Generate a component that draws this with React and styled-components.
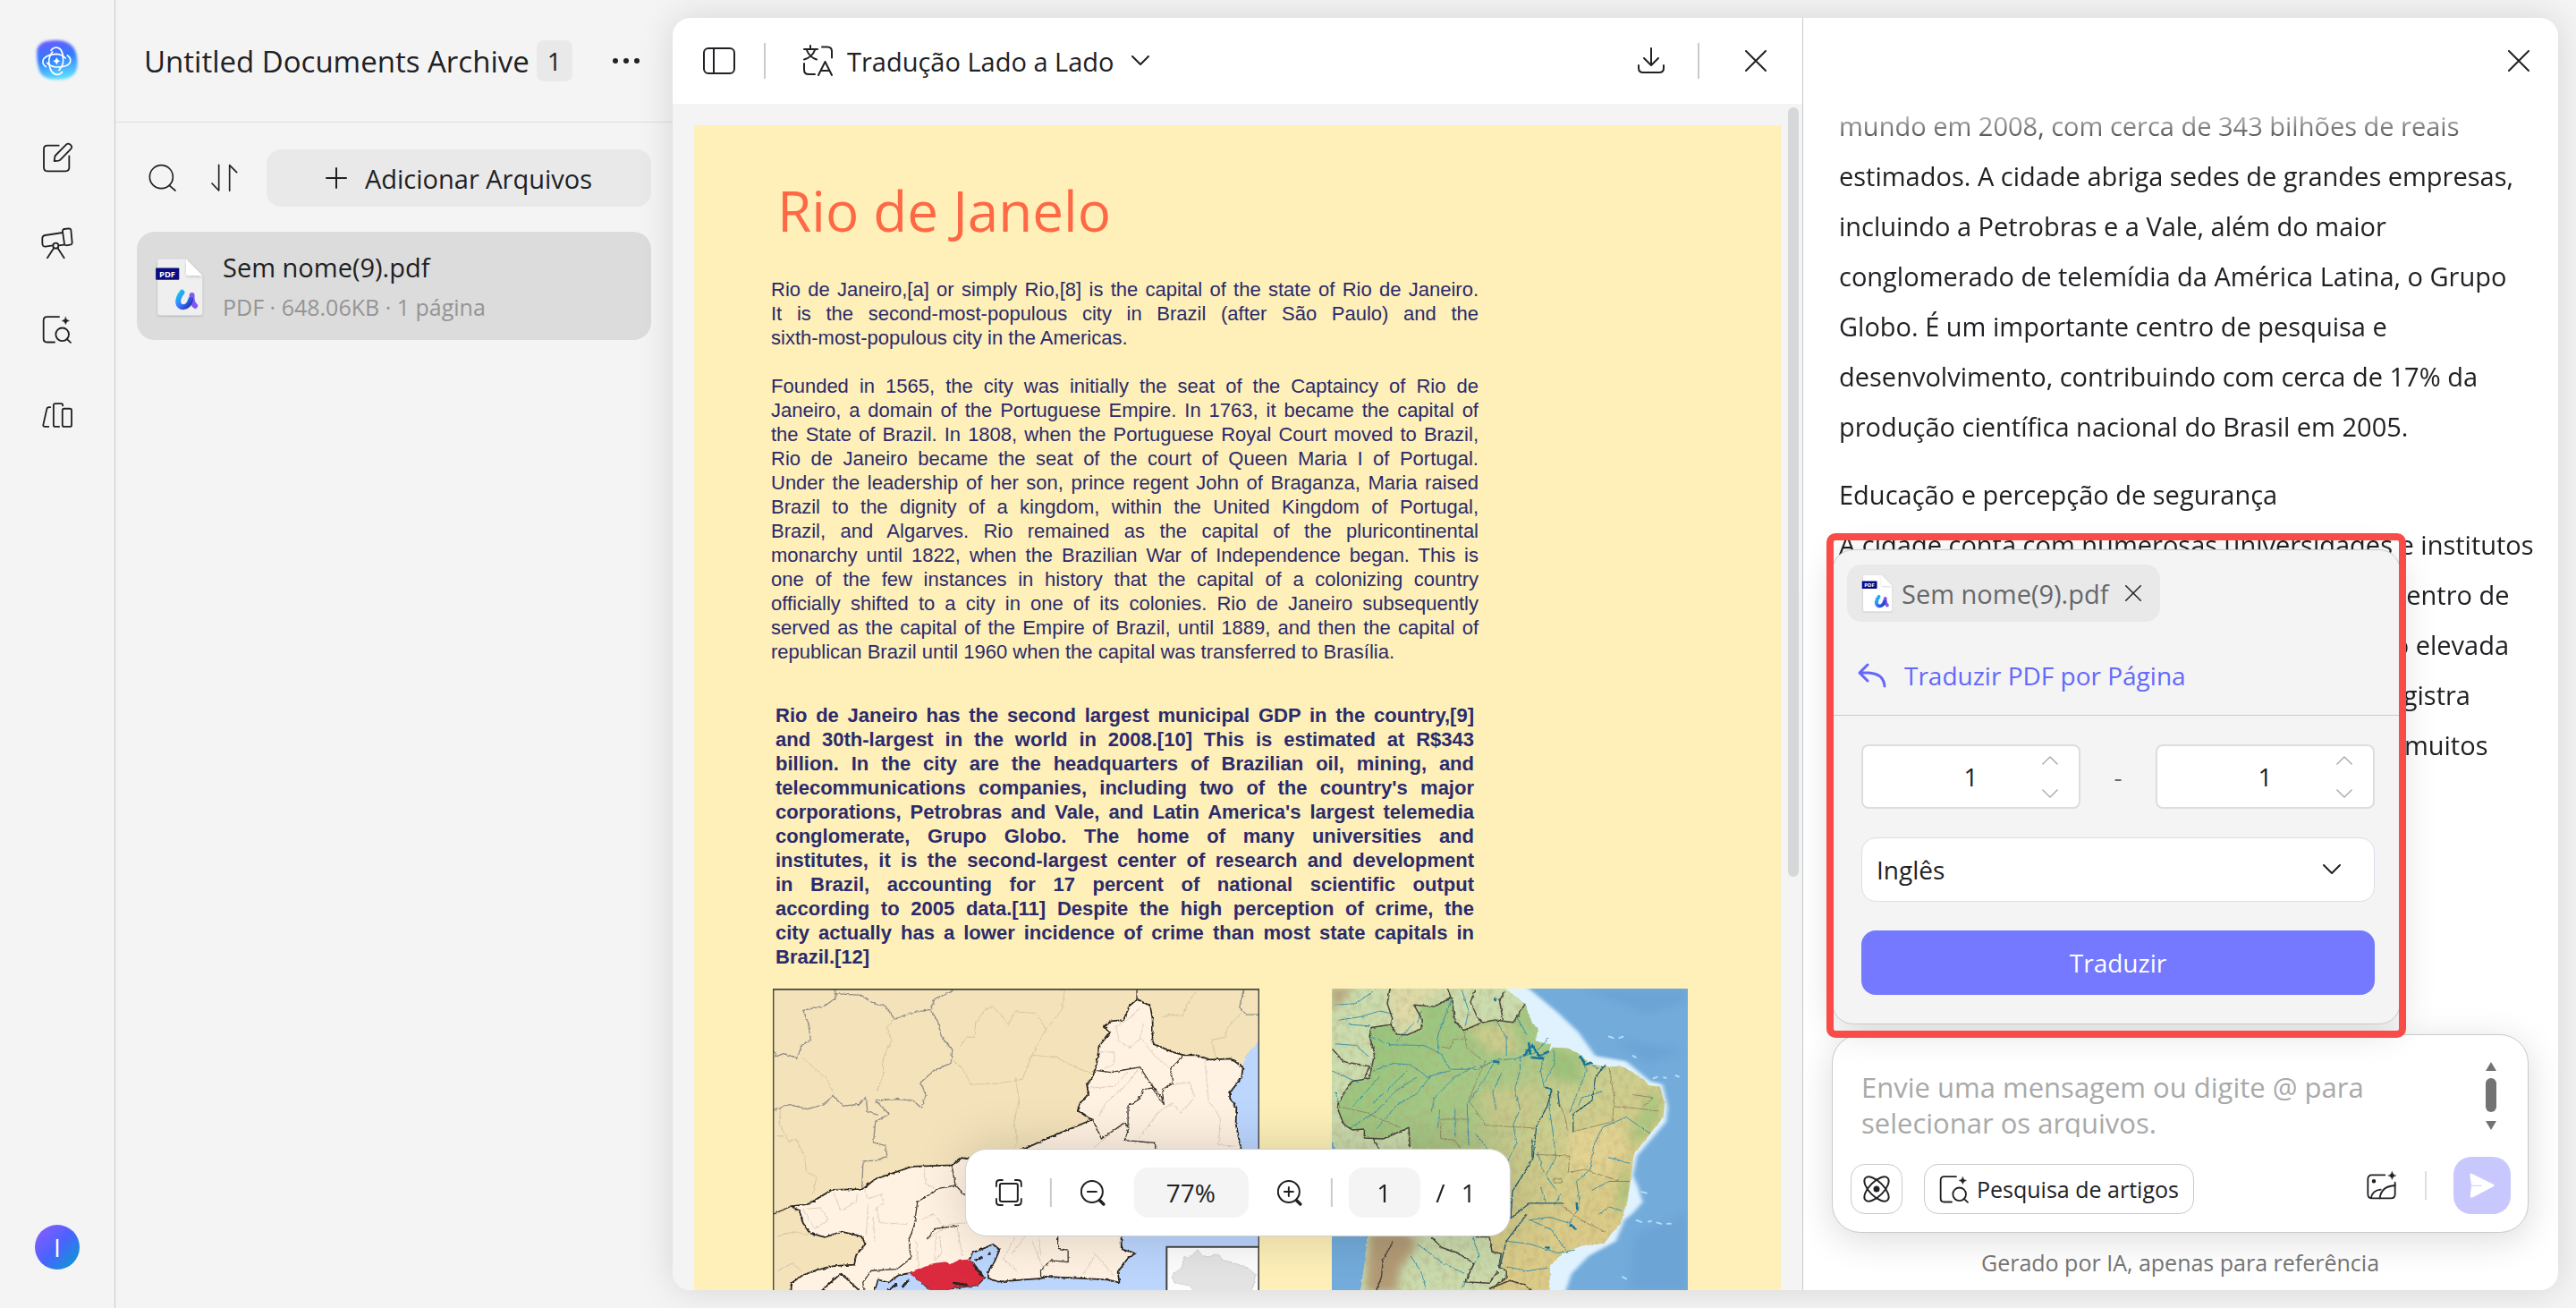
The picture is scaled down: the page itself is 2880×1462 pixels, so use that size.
import React, {useState} from 'react'

import styled, {createGlobalStyle} from 'styled-components'


const colors = {
	bg: '#f4f4f4',
	ink: '#202124',
	line: '#c9caca',
	chip: '#e9e9e9',
	violet: '#7579ff',
	link: '#6468fb',
	red: '#f94b47',
	navy: '#2a2a6c',
}

const GlobalStyle = createGlobalStyle`
	*, *::before, *::after {
		box-sizing: border-box;
	}
	body {
		margin: 0;
		background: ${colors.bg};
		color: ${colors.ink};
		font-family: "Open Sans", "Noto Sans", sans-serif;
		font-size: 28px;
	}
	button, input, select, textarea {
		font: inherit;
		color: inherit;
	}
`

/* ---------- shared ---------- */

const Svg = styled.svg`
	display: block;
	flex: none;
	fill: none;
	stroke: currentColor;
	stroke-width: ${p => p.$stroke || 2};
	stroke-linecap: round;
	stroke-linejoin: round;
`

const IconButton = styled.button`
	display: flex;
	align-items: center;
	justify-content: center;
	flex: none;
	width: ${p => p.$size || 40}px;
	height: ${p => p.$size || 40}px;
	padding: 0;
	border: none;
	background: none;
	cursor: pointer;
`

const Divider = styled.span`
	flex: none;
	width: 2px;
	height: ${p => p.$height}px;
	margin: ${p => p.$margin || '0'};
	background: ${p => p.$color || colors.line};
`

const Spacer = styled.div`
	flex: 1;
`

/* ---------- icons ---------- */

const Logo = () => (
	<svg width="52" height="50" viewBox="56 38 156 150" aria-hidden="true">
		<defs>
			<linearGradient id="logoFill" x1="0.3" y1="0" x2="0.5" y2="1">
				<stop offset="0" stopColor="#6a5cff" />
				<stop offset="0.45" stopColor="#2f7bff" />
				<stop offset="1" stopColor="#5fe0ff" />
			</linearGradient>
			<filter id="logoBlur"><feGaussianBlur stdDeviation="4" /></filter>
		</defs>
		<path d="M66 78Q70 44 130 44q52 0 66 40 8 24 4 54-8 38-66 38-50 0-60-30-10-30-8-68z" fill="url(#logoFill)" filter="url(#logoBlur)" />
		<g fill="none" stroke="#fff" strokeWidth="5" strokeLinecap="round">
			<path d="M113 78q7-10 19-10 22 3 22 42 0 20-14 34" />
			<path d="M168 95q12 8 10 20-4 19-44 19-20 0-34-14" />
			<path d="M151 150q-7 10-19 9-22-2-26-42 0-20 12-34" />
			<path d="M96 133q-12-8-10-20 4-19 42-23 20 0 34 14" />
		</g>
		<path d="M132 102q3 10 12 12-9 2-12 12-3-10-12-12 9-2 12-12z" fill="#fff" />
	</svg>
)

const EditIcon = () => (
	<Svg width="35" height="35" viewBox="81 387 105 105" $stroke={5.5}>
		<path d="M137 398H99q-12 0-12 12v62q0 12 12 12h61q12 0 12-12v-39" />
		<path d="M122 450l2-14q1-4 4-7l34-34q6-6 14 0 8 7 2 14l-35 36q-3 3-7 4z" />
	</Svg>
)

const TelescopeIcon = () => (
	<Svg width="36" height="36" viewBox="77 670 108 108" $stroke={5.5}>
		<path d="M149 688L90 697q-9 2-9 10v17q1 11 10 11l25-4M136 731l18-2" />
		<path d="M154 676l17-2q5 0 6 5l4 43q0 5-4 6l-15 3q-6 0-7-5l-6-42q0-7 5-8z" />
		<circle cx="126" cy="732" r="9" />
		<path d="M120 739L98 773M132 739l22 34" />
	</Svg>
)

const PaperSearchIcon = () => (
	<Svg width="34" height="33" viewBox="82 968 102 98" $stroke={5.5}>
		<path d="M139 974H99q-12 0-12 12v61q0 12 12 12h25" />
		<circle cx="150" cy="1033" r="22" />
		<path d="M165 1048l13 12" />
		<path d="M161 974q2 11 13 13-11 2-13 13-2-11-13-13 11-2 13-13z" fill="currentColor" strokeWidth="1" />
	</Svg>
)

const LibraryIcon = () => (
	<Svg width="35" height="30" viewBox="78 1257 106 90" $stroke={5.5}>
		<path d="M106 1275h-4q-7 0-8 7l-12 53q-1 6 6 6h12" />
		<path d="M148 1270v-3q0-4-5-4h-20q-6 0-6 6v66q0 6 6 6h13" />
		<rect x="147" y="1280" width="31" height="61" rx="6" />
	</Svg>
)

const SearchIcon = () => (
	<Svg width="32" height="32" viewBox="438 461 96 96" $stroke={5}>
		<circle cx="481" cy="505" r="39" />
		<path d="M508 534l20 17" />
	</Svg>
)

const SortIcon = () => (
	<Svg width="32" height="32" viewBox="649 457 96 96" $stroke={5}>
		<path d="M678 461v86l-23-24M714 548v-86l24 24" />
	</Svg>
)

const PlusIcon = () => (
	<Svg width="24" height="24" viewBox="0 0 24 24">
		<path d="M12 1v22M1 12h22" />
	</Svg>
)

const DotsIcon = () => (
	<Svg width="32" height="8" viewBox="0 0 32 8">
		<g fill="currentColor" stroke="none">
			<circle cx="4" cy="4" r="3" />
			<circle cx="16" cy="4" r="3" />
			<circle cx="28" cy="4" r="3" />
		</g>
	</Svg>
)

const PanelIcon = () => (
	<Svg width="36" height="30" viewBox="0 0 36 30">
		<rect x="1" y="1" width="34" height="28" rx="5" />
		<path d="M12 1v28" />
	</Svg>
)

const TranslateIcon = () => (
	<Svg width="36" height="36" viewBox="896 50 36 36">
		<path d="M906 51v4M899 55h15M902 56q3 8 11 10.500M911 56q-3 8-12 10.500" />
		<path d="M919 52.500h6q5 0 5 5v7M899 71v7q0 5 5 5h7" />
		<path d="M915 84l7.500-15 7.500 15M918 79h9" />
	</Svg>
)

const Chevron = ({up, width = 20, stroke = 2}) => (
	<Svg width={width} height={width / 2 + 2} viewBox="0 0 20 12" $stroke={stroke}>
		<path d={up ? 'M1 11l9-9 9 9' : 'M1 1l9 9 9-9'} />
	</Svg>
)

const DownloadIcon = () => (
	<Svg width="32" height="30" viewBox="1830 53 32 30">
		<path d="M1846 54v19M1838 65l8 8 8-8M1832 73v3q0 5 5 5h18q5 0 5-5v-3" />
	</Svg>
)

const CloseIcon = ({size = 24}) => (
	<Svg width={size} height={size} viewBox="0 0 24 24">
		<path d="M1 1l22 22M23 1L1 23" />
	</Svg>
)

const FitIcon = () => (
	<Svg width="30" height="30" viewBox="0 0 30 30">
		<rect x="5" y="5" width="20" height="20" rx="2" />
		<path d="M1 8V5q0-4 4-4h3M22 1h3q4 0 4 4v3M29 22v3q0 4-4 4h-3M8 29H5q-4 0-4-4v-3" />
	</Svg>
)

const ZoomIcon = ({plus}) => (
	<Svg width="28" height="30" viewBox="0 0 28 30">
		<circle cx="13" cy="14" r="12" />
		<path d={plus ? 'M8 14h10M13 9v10' : 'M8 14h10'} />
		<path d="M22 24l4 4" strokeWidth="3.500" />
	</Svg>
)

const BackIcon = () => (
	<Svg width="32" height="28" viewBox="0 0 32 28" $stroke={3}>
		<path d="M11 2L2 11l9 9M2 11h10q17 1 18 15" />
	</Svg>
)

const AtomIcon = () => (
	<Svg width="32" height="32" viewBox="0 0 32 32">
		<ellipse cx="16" cy="16" rx="17.500" ry="8" transform="rotate(45 16 16)" />
		<ellipse cx="16" cy="16" rx="17.500" ry="8" transform="rotate(-45 16 16)" />
		<circle cx="16" cy="16" r="2.500" fill="currentColor" />
	</Svg>
)

const PictureIcon = () => (
	<Svg width="34" height="34" viewBox="1040 383 102 102" $stroke={5.5}>
		<path d="M1101 399h-43q-14 0-14 14v50q0 14 14 14h63q14 0 14-14v-39" />
		<path d="M1055 476q4-26 32-28M1084 477q4-40 51-43" />
		<circle cx="1064" cy="420" r="4" fill="currentColor" />
		<path d="M1125 387q2 12 14 14-12 2-14 14-2-12-14-14 12-2 14-14z" fill="currentColor" strokeWidth="1" />
	</Svg>
)

const SendIcon = () => (
	<svg width="28" height="28" viewBox="1388 394 84 84" aria-hidden="true">
		<path d="M1395 396l73 36q5 4 0 8l-72 37q-5 1-6-4l4-35h34v-3h-34l-5-34q0-6 6-5z" fill="#fff" />
	</svg>
)

const PdfIcon = ({width, paper}) => (
	<svg width={width} height={Math.round(width * 1.2)} viewBox="462 772 160 192" aria-hidden="true">
		<defs>
			<linearGradient id="uLeft" x1="0" y1="0" x2="1" y2="1">
				<stop offset="0" stopColor="#16c6f5" />
				<stop offset="0.5" stopColor="#3a78ff" />
				<stop offset="1" stopColor="#1f2fae" />
			</linearGradient>
			<filter id="softShadow" x="-20%" y="-20%" width="140%" height="150%">
				<feDropShadow dx="0" dy="4" stdDeviation="4" floodOpacity="0.18" />
			</filter>
		</defs>
		<path d="M477 777h85l52 52v121q0 6-6 6H477q-6 0-6-6V783q0-6 6-6z" fill={paper} filter="url(#softShadow)" />
		<path d="M562 777l52 52h-46q-6 0-6-6z" fill="#fff" filter="url(#softShadow)" />
		<rect x="465" y="805" width="75" height="38" rx="2" fill="#0b0b82" />
		<text x="502" y="834" fontSize="27" fontWeight="700" fill="#fff" textAnchor="middle">PDF</text>
		<g fill="none" strokeLinecap="round">
			<path d="M581 892q-2 24 10 34" stroke="#8458f0" strokeWidth="17" />
			<path d="M549 883q-14 18-12 34 3 14 18 13 16-2 22-24" stroke="url(#uLeft)" strokeWidth="17" />
		</g>
	</svg>
)

/* ---------- left rail ---------- */

const Shell = styled.div`
	display: flex;
	height: 100vh;
	overflow: hidden;
`

const Rail = styled.nav`
	display: flex;
	flex-direction: column;
	align-items: center;
	flex: none;
	width: 129px;
	padding: 43px 0;
	border-right: 1px solid ${colors.line};
`

const RailLinks = styled.div`
	display: flex;
	flex-direction: column;
	gap: 48px;
	margin-top: 59px;
`

const RailLink = styled.a`
	display: flex;
	align-items: center;
	justify-content: center;
	width: 48px;
	height: 48px;
	color: inherit;
`

const Avatar = styled.button`
	width: 50px;
	height: 50px;
	margin-top: auto;
	padding: 0;
	border: none;
	border-radius: 50%;
	background: linear-gradient(135deg, #8a5cff 5%, #4a63ff 50%, #00a3c8 100%);
	color: white;
	line-height: 50px;
`

/* ---------- file sidebar ---------- */

const Sidebar = styled.aside`
	flex: none;
	width: 623px;
`

const SidebarHeader = styled.header`
	display: flex;
	align-items: center;
	height: 137px;
	padding: 0 32px 0 32px;
	border-bottom: 1px solid #dcdce8;
`

const ArchiveTitle = styled.h1`
	margin: 0;
	font-size: 33px;
	font-weight: 400;
	white-space: nowrap;
`

const CountBadge = styled.span`
	width: 40px;
	margin-left: 8px;
	border-radius: 8px;
	background: ${colors.chip};
	line-height: 46px;
	text-align: center;
`

const SidebarBody = styled.div`
	padding: 30px 24px;
`

const FileTools = styled.div`
	display: flex;
	align-items: center;
	gap: 25px;
	padding-left: 7px;
`

const AddButton = styled.button`
	display: flex;
	align-items: center;
	justify-content: center;
	gap: 20px;
	flex: 1;
	height: 64px;
	border: none;
	border-radius: 16px;
	background: ${colors.chip};
	font-size: 29px;
`

const FileCard = styled.a`
	display: flex;
	align-items: center;
	gap: 20px;
	margin-top: 28px;
	padding: 18px 20px 15px;
	border-radius: 20px;
	background: #dcdcdc;
	color: inherit;
	text-decoration: none;
`

const FileName = styled.div`
	font-size: 29px;
	line-height: 44px;
`

const FileMeta = styled.div`
	color: #949494;
	font-size: 25px;
	line-height: 44px;
`

/* ---------- document viewer ---------- */

const Workspace = styled.main`
	display: flex;
	flex: 1;
	min-width: 0;
	margin: 20px 20px 20px 0;
	border-radius: 20px;
	background: white;
	box-shadow: 0 0 40px rgba(0, 0, 0, 0.13);
`

const Viewer = styled.section`
	position: relative;
	display: flex;
	flex-direction: column;
	flex: 1;
	min-width: 0;
`

const ViewerBar = styled.header`
	display: flex;
	align-items: center;
	flex: none;
	height: 96px;
	padding: 0 32px;
`

const ModeButton = styled.button`
	display: flex;
	align-items: center;
	gap: 15px;
	padding: 0;
	border: none;
	background: none;
	font-size: 29px;
	white-space: nowrap;

	svg:last-child {
		margin-left: 4px;
	}
`

const ViewerBody = styled.div`
	flex: 1;
	min-height: 0;
	padding: 24px 24px 0;
	overflow: hidden;
	border-bottom-left-radius: 20px;
	background: ${colors.bg};
`

const ScrollThumb = styled.div`
	position: absolute;
	top: 100px;
	right: 4px;
	width: 12px;
	height: 65%;
	max-height: 860px;
	border-radius: 6px;
	background: #d5d7d9;
`

const Page = styled.article`
	padding: 50px 86px 0;
	background: #fef0b8;
	color: ${colors.navy};
	font-family: "Liberation Sans", Arial, sans-serif;
	font-size: 22px;
	line-height: 27px;
`

const PageTitle = styled.h2`
	margin: 0 0 30px 7px;
	color: #ff6845;
	font-family: "Open Sans", "Noto Sans", sans-serif;
	font-size: 62px;
	font-weight: 400;
	line-height: 90px;
`

const Paragraph = styled.p`
	width: ${p => p.$bold ? 781 : 791}px;
	margin: 0 0 27px;
	font-weight: ${p => p.$bold ? 700 : 400};

	${p => p.$bold && `
		margin: 44px 0 22px 5px;
	`}
`

const Line = styled.span`
	display: block;
	text-align-last: justify;
	white-space: nowrap;

	&:last-child {
		text-align-last: left;
	}
`

const Figures = styled.div`
	display: flex;
	gap: 81px;
	padding-left: 2px;
`

const Figure = styled.svg`
	display: block;
	flex: none;
	width: ${p => p.$width}px;
	height: 338px;

	path, rect {
		vector-effect: non-scaling-stroke;
	}
`

const PagerBar = styled.div`
	position: absolute;
	left: 50%;
	bottom: 60px;
	display: flex;
	align-items: center;
	height: 98px;
	padding: 0 38px 0 28px;
	transform: translateX(-50%);
	border: 1px solid #cfcfd2;
	border-radius: 24px;
	background: white;
	box-shadow: 0 0 60px rgba(0, 0, 0, 0.16);
	white-space: nowrap;
`

const ZoomLevel = styled.span`
	width: 128px;
	margin: 0 26px;
	border-radius: 16px;
	background: ${colors.bg};
	line-height: 56px;
	text-align: center;
`

const PageInput = styled.input`
	width: 80px;
	height: 56px;
	padding: 0;
	border: none;
	border-radius: 16px;
	background: ${colors.bg};
	text-align: center;
`

const PageTotal = styled.span`
	display: flex;
	gap: 18px;
	margin-left: 18px;
`

/* ---------- chat ---------- */

const Chat = styled.section`
	display: flex;
	flex-direction: column;
	flex: none;
	width: 845px;
	padding: 0 33px 0 32px;
	border-left: 1px solid ${colors.line};
`

const ChatHeader = styled.header`
	display: flex;
	justify-content: flex-end;
	align-items: center;
	flex: none;
	height: 96px;
	margin-right: -9px;
`

const Messages = styled.div`
	flex: 1;
	min-height: 0;
	margin: -3px -24px 0 0;
	padding: 0 0 0 8px;
	overflow: hidden;
	font-size: 29px;
	line-height: 56px;
	white-space: nowrap;
	mask-image: linear-gradient(transparent, black 52px);
`

const MessageText = styled.p`
	margin: 0 0 20px;

	span {
		display: block;
	}
`

const ComposerArea = styled.div`
	position: relative;
	flex: none;
`

const Composer = styled.form`
	height: 222px;
	padding: 30px 19px 18px 32px;
	border: 1px solid ${colors.line};
	border-radius: 32px;
	background: white;
	box-shadow: 0 8px 40px rgba(0, 0, 0, 0.14);
`

const ComposerTop = styled.div`
	display: flex;
	justify-content: space-between;
	padding-right: 16px;
`

const MessageInput = styled.textarea`
	width: 640px;
	height: 76px;
	margin-top: 8px;
	padding: 0;
	border: none;
	outline: none;
	overflow: hidden;
	resize: none;
	background: none;
	font-size: 31px;
	line-height: 40px;

	&::placeholder {
		color: #a9a9a9;
	}
`

const ComposerActions = styled.div`
	display: flex;
	align-items: center;
	margin: 22px 0 0 -12px;
`

const ToolButton = styled.button`
	display: flex;
	align-items: center;
	justify-content: center;
	align-self: flex-end;
	gap: 8px;
	height: 56px;
	margin-right: 24px;
	padding: 0 ${p => p.$wide ? 16 : 12}px;
	border: 1px solid ${colors.line};
	border-radius: 16px;
	background: white;
	font-size: 25px;
	white-space: nowrap;
`

const SendButton = styled.button`
	display: flex;
	align-items: center;
	justify-content: center;
	width: 64px;
	height: 64px;
	padding: 0;
	border: none;
	border-radius: 20px;
	background: #c8c8ff;
`

const Notice = styled.p`
	flex: none;
	margin: 0;
	padding: 12px 0 10px;
	color: #757575;
	font-size: 25px;
	line-height: 42px;
	text-align: center;
`

/* ---------- translate popup ---------- */

const Popup = styled.div`
	position: absolute;
	left: 0;
	bottom: calc(100% + 11px);
	z-index: 2;
	width: 636px;
	border: 1px solid ${colors.line};
	border-radius: 24px;
	background: ${colors.bg};
	box-shadow: 0 8px 40px rgba(0, 0, 0, 0.14);

	/* highlight frame around the whole panel */
	&::after {
		content: '';
		position: absolute;
		inset: -19px -7px -16px;
		border: 8px solid ${colors.red};
		border-radius: 10px;
		pointer-events: none;
	}
`

const PopupTop = styled.div`
	padding: 16px 16px 12px;
	border-bottom: 1px solid ${colors.line};
`

const FileChip = styled.div`
	display: flex;
	align-items: center;
	width: fit-content;
	height: 64px;
	padding: 0 16px;
	border-radius: 16px;
	background: ${colors.chip};
	color: #66676a;
	font-size: 29px;

	button {
		margin-left: 14px;
		color: ${colors.ink};
	}
`

const ChipLabel = styled.span`
	margin-left: 9px;
`

const BackButton = styled.button`
	display: flex;
	align-items: center;
	gap: 20px;
	height: 64px;
	margin-top: 28px;
	padding: 0 12px;
	border: none;
	background: none;
	color: ${colors.link};
`

const PopupForm = styled.form`
	display: flex;
	flex-direction: column;
	gap: 32px;
	padding: 32px 28px 32px 32px;
`

const Range = styled.div`
	display: flex;
	align-items: center;
	justify-content: space-between;
	color: #66676a;
`

const NumberField = styled.div`
	position: relative;
	width: 245px;
	color: #a5a7ab;

	input {
		display: block;
		width: 100%;
		height: 72px;
		padding: 0;
		border: 2px solid #dcdddd;
		border-radius: 8px;
		background: white;
		color: ${colors.ink};
		text-align: center;
		appearance: textfield;
	}
	input::-webkit-inner-spin-button {
		display: none;
	}
`

const Steppers = styled.div`
	position: absolute;
	top: 0;
	right: 18px;
	display: flex;
	flex-direction: column;
	justify-content: center;
	gap: 6px;
	height: 100%;
`

const LanguageField = styled.div`
	position: relative;
	display: flex;
	align-items: center;

	select {
		width: 100%;
		height: 72px;
		padding: 0 16px;
		appearance: none;
		border: 1px solid #dcdde8;
		border-radius: 16px;
		background: white;
	}
	svg {
		position: absolute;
		right: 38px;
		pointer-events: none;
	}
`

const TranslateButton = styled.button`
	height: 72px;
	border: none;
	border-radius: 16px;
	background: ${colors.violet};
	color: white;
`

/* ---------- content ---------- */

const intro = [
	'Rio de Janeiro,[a] or simply Rio,[8] is the capital of the state of Rio de Janeiro.',
	'It is the second-most-populous city in Brazil (after São Paulo) and the',
	'sixth-most-populous city in the Americas.',
]

const history = [
	'Founded in 1565, the city was initially the seat of the Captaincy of Rio de',
	'Janeiro, a domain of the Portuguese Empire. In 1763, it became the capital of',
	'the State of Brazil. In 1808, when the Portuguese Royal Court moved to Brazil,',
	'Rio de Janeiro became the seat of the court of Queen Maria I of Portugal.',
	'Under the leadership of her son, prince regent John of Braganza, Maria raised',
	'Brazil to the dignity of a kingdom, within the United Kingdom of Portugal,',
	'Brazil, and Algarves. Rio remained as the capital of the pluricontinental',
	'monarchy until 1822, when the Brazilian War of Independence began. This is',
	'one of the few instances in history that the capital of a colonizing country',
	'officially shifted to a city in one of its colonies. Rio de Janeiro subsequently',
	'served as the capital of the Empire of Brazil, until 1889, and then the capital of',
	'republican Brazil until 1960 when the capital was transferred to Brasília.',
]

const economy = [
	'Rio de Janeiro has the second largest municipal GDP in the country,[9]',
	'and 30th-largest in the world in 2008.[10] This is estimated at R$343',
	'billion. In the city are the headquarters of Brazilian oil, mining, and',
	'telecommunications companies, including two of the country\'s major',
	'corporations, Petrobras and Vale, and Latin America\'s largest telemedia',
	'conglomerate, Grupo Globo. The home of many universities and',
	'institutes, it is the second-largest center of research and development',
	'in Brazil, accounting for 17 percent of national scientific output',
	'according to 2005 data.[11] Despite the high perception of crime, the',
	'city actually has a lower incidence of crime than most state capitals in',
	'Brazil.[12]',
]

const answer = [
	[
		'mundo em 2008, com cerca de 343 bilhões de reais',
		'estimados. A cidade abriga sedes de grandes empresas,',
		'incluindo a Petrobras e a Vale, além do maior',
		'conglomerado de telemídia da América Latina, o Grupo',
		'Globo. É um importante centro de pesquisa e',
		'desenvolvimento, contribuindo com cerca de 17% da',
		'produção científica nacional do Brasil em 2005.',
	],
	[
		'Educação e percepção de segurança',
		'A cidade conta com numerosas universidades e institutos',
		'de pesquisa, sendo o segundo maior polo e o centro de',
		'pesquisa do país. Embora já exista a percepção elevada',
		'de criminalidade, a cidade na verdade ainda registra',
		'só uma taxa menor de crimes se comparada a muitos',
	],
]

/* ---------- maps ---------- */

const coast = 'L765 190L782 210L775 250L820 262L812 292L825 272L870 275L905 295L935 328L975 335L1030 337L1080 370L1110 400L1138 403L1152 460L1148 505L1110 560L1062 630L1052 720L1044 780L1032 825L1025 860L1000 890L975 928L910 935L850 965L818 1000L815 1100'

const StateMap = () => (
	<Figure $width={544} viewBox="62 78 1422 1010" preserveAspectRatio="none" role="img" aria-label="Rio de Janeiro">
		<defs>
			<filter id="rough" x="-5%" y="-5%" width="110%" height="110%">
				<feTurbulence type="fractalNoise" baseFrequency="0.09" numOctaves="3" seed="4" />
				<feDisplacementMap in="SourceGraphic" scale="9" xChannelSelector="R" yChannelSelector="G" />
			</filter>
		</defs>
		<rect x="62" y="78" width="1422" height="1010" fill="#f3e2ba" />
		<g filter="url(#rough)" strokeLinejoin="round">
			<path d="M1500 235L1470 270L1445 300L1436 340L1300 500L1000 900L640 900L465 1010L330 1060L190 1100H1500z" fill="#bcd6fe" />
			<g fill="none" stroke="#8f8d86" strokeWidth="1.300">
				<path d="M245 80v30l-30 25-65 15 15 40 8 60-25 15-15 45-40-15-20 10-15-30M245 95l75 5 40 30 30 5 28 45 45-20 60-12 12-35 50-25V80M525 150l20 40 10 50 32 42-5 45-50 25-38 40 15 40-12 45-25-25-50-5-60 5 40 45-40 25-6 70 35 10 5 35-30 15-40 2-4 100" />
				<path d="M62 485l50-20 50 15 50-15 25-30 30 35 45-5 22-25 5 50 30 10M1438 80l-12 60 20 25h40" />
			</g>
			<g fill="none" stroke="#d5c6a5" strokeWidth="1">
				<path d="M915 80l-8 70-45 60-45 95-25 75-70 15-80 3-30-60-30-25M610 270l20-30h20l5-50 30-45 20-5 25 25 20 35 20-45 60 5 20 30 10 30M770 375l12 70-15 80 10 60-10 30M820 300l70 8 60 35 50 20M150 310l40 40 30 30 20 50M415 180l-20 30 15 40-25 60v60l-20 50M85 480l-5 50 30 60 20-10 25 60 5 50 30 15-10 60M62 570h30M75 1020l45-25 25 25M75 905l50-15 40 10M1300 85l-30 50-10 35-30-5-30 5M1430 160l-40 50-5 30-40 10 12 60" />
			</g>
			<path
				d="M1126 114L1165 135L1172 180L1172 262L1200 275L1230 290L1263 300L1300 300L1340 315L1400 312L1436 340L1432 375L1398 425L1398 445L1417 475L1415 530L1430 610L1440 700L1300 800L1140 870L1080 890L1081 948L1122 962L1100 978L1070 1025L1075 1060L1040 1050L860 1040L848 1046L720 1057L692 1045L692 1020L710 990L725 950L705 932L680 945L645 960L637 985L655 1010L680 1045L660 1068L580 1080L530 1092L465 1028L430 1035L400 1060L370 1050L358 1092L200 1092L240 1050L262 1030L290 1060L320 1092L115 1092L118 1060L150 1035L190 1018L240 1005L300 1000L305 970L333 930L320 905L262 890L215 908L170 895L150 860L140 820L115 805L165 798L235 750L325 748L360 715L470 672L585 668L615 643L640 648L800 612L870 575L997 515L985 510L953 485L960 460L985 430L980 400L998 370L1010 320L1015 270L1048 225L1028 205L1050 187L1087 183L1105 135z"
				fill="#fff2e2"
				stroke="#2b2823"
				strokeWidth="1.800"
			/>
			<g fill="none" stroke="#e0cfc0" strokeWidth="1">
				<path d="M1065 205l30-20 40-40M1065 205l10 50 30 20 30-30 10-50M1010 290h50v40l-30 15M1135 340l-40 60-60 60-20 45M990 410l70-5 40-50M1140 245l40 60 45 40M1325 320l10 130 35 60-5 90 50 5M1230 400l50-10 15 50-40 55-25-35-40 30-60 90M1000 610l50-50 30-30" />
				<path d="M150 815l50-5 25 40-40 30zM240 760l20 60 45-30 5-30M330 750l10 30 40-15 5 30-20 15 10 50 80 5M360 920l-5-80M340 800l-5 100M505 680l5 50 25 15M500 850l30-20 40 50M520 910l60-45 50-5M540 905l-5 80 20-20-5-60M600 870l15 100M800 905l-40 60M840 910l5 60M770 910l-35 70 40 40M1000 960l40 50 20 30M820 920l35 100M970 1030l30-55M480 920l10 90" />
			</g>
			<g fill="none" stroke="#3b362f" strokeWidth="1.300">
				<path d="M1126 80v34M997 515l25 65 70-55 10 20-12 40 90 8v80M1100 540v-70l30-20 15-35 25-5 35 55-5-50 30-20-5-50 35-40M1000 350l50 8 85-18 25 45 40 60" />
				<path d="M62 832l50-25M585 668l10 65 40 50M595 735l-45 10-65 45-10 80-15 50 5 60-40 35-75 5-25 40 5 30M895 906v40l30 5v40l-50-5-30 30v28M605 870l-70 10-20 35" />
			</g>
			<path d="M462 1028L530 995L570 990L580 1000L605 985L637 983L655 1010L680 1045L660 1068L600 1075L545 1092H530z" fill="#db2a3e" />
			<path d="M655 985l20-10M650 1000l25 40M590 1062l40 5M400 1085l25-20M440 1075l20-25M695 960v8" stroke="#2b2823" strokeWidth="3" fill="none" />
		</g>
		<rect x="1213" y="941" width="270" height="160" fill="#fdfdfd" stroke="#45443f" strokeWidth="2" />
		<path d="M1228 1035l30-25 5-35 25-5 15-20 20 25 40-10 15 20 60 20 35 25-10 60-20 10H1300l-20-30-45-10z" fill="#e4e4e4" stroke="#d2d2d2" filter="url(#rough)" />
		<rect x="63" y="80" width="1420" height="1020" fill="none" stroke="#45443f" strokeWidth="2" />
	</Figure>
)

const ReliefMap = () => (
	<Figure $width={398} viewBox="180 75 1040 1012" preserveAspectRatio="none" role="img" aria-label="Brazil">
		<defs>
			<linearGradient id="brazil" x1="0.05" y1="0.2" x2="0.65" y2="0.85">
				<stop offset="0" stopColor="#97c67e" />
				<stop offset="0.4" stopColor="#a8c987" />
				<stop offset="0.62" stopColor="#c9cf90" />
				<stop offset="1" stopColor="#dccb88" />
			</linearGradient>
			<filter id="edge" x="-5%" y="-5%" width="110%" height="110%">
				<feTurbulence type="fractalNoise" baseFrequency="0.08" numOctaves="3" seed="9" />
				<feDisplacementMap in="SourceGraphic" scale="8" xChannelSelector="R" yChannelSelector="G" />
			</filter>
			<filter id="soft" x="-30%" y="-30%" width="160%" height="160%"><feGaussianBlur stdDeviation="14" /></filter>
			<filter id="haze"><feGaussianBlur stdDeviation="5" /></filter>
			<filter id="relief" x="0" y="0" width="100%" height="100%">
				<feTurbulence type="fractalNoise" baseFrequency="0.06 0.04" numOctaves="5" seed="12" />
				<feColorMatrix values="0 0 0 0 0.45  0 0 0 0 0.38  0 0 0 0 0.18  1.600 0 0 0 -0.680" />
			</filter>
			<clipPath id="landClip"><path d={`M180 75H680L745 125${coast}H262L275 1000L285 906L240 740L180 560z`} /></clipPath>
		</defs>
		<rect x="180" y="75" width="1040" height="1012" fill="#73acdb" />
		<path d="M900 75L1100 160L1220 120V75zM1000 240L1100 330L1220 280zM1060 900L1220 820V1086H1050z" fill="#699fd2" opacity="0.600" filter="url(#soft)" />
		<path d="M660 60H740L840 155L900 220L950 300L1040 318L1110 385L1146 395L1162 470L1157 520L1072 635L1060 700L1075 740L1088 790L1060 826L1035 850L1010 920L930 970L880 1030L860 1100H700z" fill="#dff2fe" filter="url(#haze)" />
		<path d="M990 235l12 5M1020 240l10-4M1060 300l8 5M1120 375l10-4M1150 372l6 2M1185 366l8 4M1070 850l14 6M1105 855l8-2M1130 858l12 4M1160 862l10 0M1085 755l14 4M1030 1040l10 6" stroke="#b5dcf7" strokeWidth="2" strokeLinecap="round" />
		<g filter="url(#edge)">
			<path d={`M170 60H670L745 125${coast}H262L275 1000L285 906L240 740L170 560z`} fill="#cbdcae" />
			<path
				d={`M420 130L480 135L530 105L540 185L565 215L615 190L655 180L710 188L735 145L745 125${coast}H640V1080L690 1045L690 1020L668 1005L675 962L648 955L640 906L620 760L440 640L408 600L405 540L330 578L275 575L275 545L240 548L215 530L195 470L215 425L240 385L290 375L305 290L290 235L295 205L355 195L370 228L400 230L440 210L440 180z`}
				fill="url(#brazil)"
			/>
		</g>
		<g clipPath="url(#landClip)">
			<g filter="url(#soft)">
				<path d="M350 75H520L430 130L440 200L390 225L350 150z" fill="#e4d9a6" opacity="0.800" />
				<path d="M180 75H240L180 150z" fill="#b39b74" />
				<path d="M290 890H400L430 930L380 1010L370 1090H280z" fill="#b39a76" />
				<path d="M570 200L700 190L730 290L640 290z" fill="#cdcc8e" opacity="0.900" />
				<path d="M600 420L780 400V540H650z" fill="#c9c98b" opacity="0.800" />
				<path d="M870 560L1010 520L1040 620L980 700L880 680z" fill="#e3d392" />
				<path d="M1110 410L1140 430L1140 520L1060 610L1050 560z" fill="#a3c67c" opacity="0.800" />
				<path d="M1040 650L1050 760L1010 850L1020 740z" fill="#94c276" opacity="0.800" />
				<path d="M800 270L900 300L920 400L820 370z" fill="#95c077" opacity="0.800" />
				<path d="M430 600L560 480L620 620z" fill="#a9c486" opacity="0.600" />
			</g>
			<rect x="180" y="75" width="1040" height="1012" filter="url(#relief)" opacity="0.550" />
		</g>
		<g fill="none" strokeLinejoin="round" filter="url(#edge)">
			<g stroke="#3f93a8" strokeWidth="1">
				<path d="M290 235l60 28 100 2 50 30 25 50 80 0 50-30 60-5 60-20 40-50M300 350l60-25 50 5 50 40 65-20M230 545l80-60 60-70 60-45M240 470l80-100M300 460l100-110M310 545l60-80 60-40 40-60M470 490l10-50 60-70 60-35M580 600l-5-140 50-80 30-60M660 480l-10-60 25-60M730 300v50l-15 60 15 70-20 50 10 60-25 60-10 60M800 300l-10 50 10 55 20 5-5 60 10 80 10 90-30 60 30 50M200 180l60-10 60-20 40 10M190 130l60-5 50-40M190 260l60 5 40 40M230 195l60 5M370 250l50-60M440 150l-10 40M490 290v-60l20-60 20-60M570 200l10-50-20-70M660 180l30 60v60M750 230l-30-60M830 280v50l-30 60M910 300l15 50-30 80-20 60M940 330l30 20" />
				<path d="M1110 560l-70-55-70 35-25 60-10 80-40 40 10 80-30 60-60-20-60 10M430 930l70 60 70 40M410 970l30 50 15 60M590 906l20 60-50 110M690 920l70 10 80 30 50-10M760 850l60 30 50 80M940 750l50-30 60 0M990 640l60 20M960 830l30-25 40 15M690 1005l60 15 60-10M495 480l-5 60M540 480v90M600 560l40 60M780 620l20 70M790 740l15 50M900 470l10-30 60-20M850 760l-20 40M180 350l80 40M190 420l15 60" />
			</g>
			<g stroke="#15749a" strokeWidth="2.500">
				<path d="M740 300l25-35 20 35 30-15M755 255l5 40M760 305l40 5M650 318l20 4M905 300l15 30 20-8M895 790l2 25M875 865l20 15M805 940l10 4M655 105l4 12" />
			</g>
			<path d="M805 405l18 8-15 60-30 60-10 110-60 110-5 90 55-50 100 0M845 470l-5-50M765 640v-60M750 830l-60 90-20 90M885 555l0-60 55-45 10-80 30-40" stroke="#245f70" strokeWidth="1.300" />
			<g stroke="#4d4740" strokeWidth="1.500">
				<path d="M350 75l-8 50 15 50-5 20 18 33 30 2 40-20 5-30-25-50 60 5 48-30-10-30M530 105l10 80 25 30 50-25 40-10 55 8 25-43 10-20M600 80l-15 40 20 50 15 20M685 85l-15 30 10 65" />
				<path d="M355 195l-60 10-5 30 15 55-15 85-50 10-25 40-20 45 20 60 25 18 35-3v30l55 3 75-38 3 65M180 275l35 45 75 15-15 40M300 575l20 40M470 906l30 35 50 20 45 35-25 60 70 5 25-40M600 906h40l8 50 27 6-7 43 22 15v25l-50 35M640 1080l60-28 45 15 20 20M360 920l-30 60-5 60-15 46" />
			</g>
			<g stroke="#948a66" strokeWidth="1">
				<path d="M580 450l50 82 145 10M500 512h75M498 512v65l40 5 20 30M200 470l80 20 100 50M565 245h-30l-10 30-25-5M565 215l10 60 45 40M580 445l50-130M775 630l100 5-5 60M870 550l-10-50-15-40M990 340l15 100-5 80-120 35M1005 470l60 5 70 10M1060 430l60 10-30 30M870 690l50-10 100 40M830 710h20v15h-20zM850 800l60 50 70 40" />
			</g>
		</g>
	</Figure>
)

const Lines = ({text, bold}) => (
	<Paragraph $bold={bold}>
		{text.map(a => <Line key={a}>{a}</Line>)}
	</Paragraph>
)

const PageNumber = ({label, value, onChange}) => (
	<NumberField>
		<input type="number" min="1" aria-label={label} value={value} onChange={e => onChange(Number(e.target.value))} />
		<Steppers>
			<IconButton type="button" $size={32} aria-label={`${label} +`} onClick={() => onChange(value + 1)}><Chevron up width={18} stroke={1.5} /></IconButton>
			<IconButton type="button" $size={32} aria-label={`${label} -`} onClick={() => onChange(Math.max(1, value - 1))}><Chevron width={18} stroke={1.5} /></IconButton>
		</Steppers>
	</NumberField>
)

const TranslatePopup = () => {
	const [from, setFrom] = useState(1)
	const [to, setTo] = useState(1)
	const [language, setLanguage] = useState('en')

	return (
		<Popup>
			<PopupTop>
				<FileChip>
					<PdfIcon width={36} paper="#ffffff" />
					<ChipLabel>Sem nome(9).pdf</ChipLabel>
					<IconButton type="button" $size={28} aria-label="Remover arquivo"><CloseIcon size={18} /></IconButton>
				</FileChip>
				<BackButton type="button"><BackIcon />Traduzir PDF por Página</BackButton>
			</PopupTop>
			<PopupForm onSubmit={e => e.preventDefault()}>
				<Range>
					<PageNumber label="Da página" value={from} onChange={setFrom} />
					<span>-</span>
					<PageNumber label="Até a página" value={to} onChange={setTo} />
				</Range>
				<LanguageField>
					<select aria-label="Idioma" value={language} onChange={e => setLanguage(e.target.value)}>
						<option value="en">Inglês</option>
						<option value="pt">Português</option>
						<option value="es">Espanhol</option>
					</select>
					<Chevron />
				</LanguageField>
				<TranslateButton type="submit">Traduzir</TranslateButton>
			</PopupForm>
		</Popup>
	)
}

const App = () => {
	const [message, setMessage] = useState('')
	const [page, setPage] = useState('1')

	return (
		<Shell>
			<GlobalStyle />
			<Rail>
				<Logo />
				<RailLinks>
					<RailLink href="#new" aria-label="Novo"><EditIcon /></RailLink>
					<RailLink href="#explore" aria-label="Explorar"><TelescopeIcon /></RailLink>
					<RailLink href="#papers" aria-label="Artigos"><PaperSearchIcon /></RailLink>
					<RailLink href="#library" aria-label="Biblioteca"><LibraryIcon /></RailLink>
				</RailLinks>
				<Avatar type="button">I</Avatar>
			</Rail>

			<Sidebar>
				<SidebarHeader>
					<ArchiveTitle>Untitled Documents Archive</ArchiveTitle>
					<CountBadge>1</CountBadge>
					<Spacer />
					<IconButton type="button" aria-label="Mais opções"><DotsIcon /></IconButton>
				</SidebarHeader>
				<SidebarBody>
					<FileTools>
						<IconButton type="button" $size={44} aria-label="Buscar"><SearchIcon /></IconButton>
						<IconButton type="button" $size={44} aria-label="Ordenar"><SortIcon /></IconButton>
						<AddButton type="button"><PlusIcon />Adicionar Arquivos</AddButton>
					</FileTools>
					<FileCard href="#file">
						<PdfIcon width={56} paper="#efefef" />
						<div>
							<FileName>Sem nome(9).pdf</FileName>
							<FileMeta>PDF · 648.06KB · 1 página</FileMeta>
						</div>
					</FileCard>
				</SidebarBody>
			</Sidebar>

			<Workspace>
				<Viewer>
					<ViewerBar>
						<IconButton type="button" aria-label="Painel"><PanelIcon /></IconButton>
						<Divider $height={40} $margin="0 40px 0 30px" />
						<ModeButton type="button"><TranslateIcon />Tradução Lado a Lado<Chevron /></ModeButton>
						<Spacer />
						<IconButton type="button" aria-label="Baixar"><DownloadIcon /></IconButton>
						<Divider $height={40} $margin="0 43px 0 32px" />
						<IconButton type="button" aria-label="Fechar"><CloseIcon /></IconButton>
					</ViewerBar>
					<ViewerBody>
						<Page>
							<PageTitle>Rio de Janelo</PageTitle>
							<Lines text={intro} />
							<Lines text={history} />
							<Lines text={economy} bold />
							<Figures>
								<StateMap />
								<ReliefMap />
							</Figures>
						</Page>
					</ViewerBody>
					<ScrollThumb />
					<PagerBar>
						<IconButton type="button" aria-label="Ajustar"><FitIcon /></IconButton>
						<Divider $height={32} $margin="0 26px" />
						<IconButton type="button" aria-label="Reduzir"><ZoomIcon /></IconButton>
						<ZoomLevel>77%</ZoomLevel>
						<IconButton type="button" aria-label="Ampliar"><ZoomIcon plus /></IconButton>
						<Divider $height={32} $margin="0 18px 0 26px" />
						<PageInput aria-label="Página" value={page} onChange={e => setPage(e.target.value)} />
						<PageTotal><span>/</span><span>1</span></PageTotal>
					</PagerBar>
				</Viewer>

				<Chat>
					<ChatHeader>
						<IconButton type="button" aria-label="Fechar conversa"><CloseIcon /></IconButton>
					</ChatHeader>
					<Messages>
						{answer.map(block => (
							<MessageText key={block[0]}>
								{block.map(a => <span key={a}>{a}</span>)}
							</MessageText>
						))}
					</Messages>
					<ComposerArea>
						<TranslatePopup />
						<Composer onSubmit={e => e.preventDefault()}>
							<ComposerTop>
								<MessageInput
									aria-label="Mensagem"
									placeholder="Envie uma mensagem ou digite @ para selecionar os arquivos."
									value={message}
									onChange={e => setMessage(e.target.value)}
								/>
								<svg width="12" height="76" viewBox="0 0 12 76" fill="#737373" aria-hidden="true">
									<path d="M6 0l6 10H0zM0 66h12l-6 10z" />
									<rect y="18" width="12" height="38" rx="6" />
								</svg>
							</ComposerTop>
							<ComposerActions>
								<ToolButton type="button" aria-label="Raciocínio"><AtomIcon /></ToolButton>
								<ToolButton type="button" $wide><PaperSearchIcon />Pesquisa de artigos</ToolButton>
								<Spacer />
								<IconButton type="button" aria-label="Imagem"><PictureIcon /></IconButton>
								<Divider $height={32} $color="#dcdfe8" $margin="0 30px 0 28px" />
								<SendButton type="submit" aria-label="Enviar"><SendIcon /></SendButton>
							</ComposerActions>
						</Composer>
					</ComposerArea>
					<Notice>Gerado por IA, apenas para referência</Notice>
				</Chat>
			</Workspace>
		</Shell>
	)
}

export default App
